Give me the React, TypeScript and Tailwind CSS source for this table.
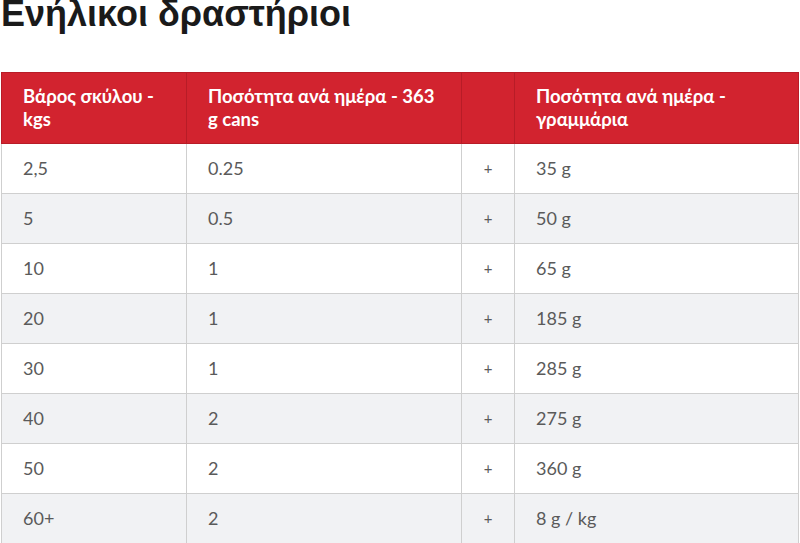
import React from "react";

const rows: [string, string, string][] = [
  ["2,5", "0.25", "35 g"],
  ["5", "0.5", "50 g"],
  ["10", "1", "65 g"],
  ["20", "1", "185 g"],
  ["30", "1", "285 g"],
  ["40", "2", "275 g"],
  ["50", "2", "360 g"],
  ["60+", "2", "8 g / kg"],
];

export default function App() {
  return (
    <div className="w-[800px] h-[543px] overflow-hidden bg-white">
      <h2 className="font-['Liberation_Sans',Arial,sans-serif] font-bold text-[36px] leading-none text-[#1a1a1a] pl-[1px] -mt-[4px] h-[76px]">
        Ενήλικοι δραστήριοι
      </h2>
      <table className="ml-[1px] w-[798px] border-collapse table-fixed font-['Lato',sans-serif]">
        <colgroup>
          <col className="w-[185px]" />
          <col className="w-[275px]" />
          <col className="w-[53px]" />
          <col />
        </colgroup>
        <thead>
          <tr className="bg-[#d2232f] text-white font-bold text-[18.5px] h-[71px]">
            <th className="text-left align-middle pl-[21px] pr-[18px] leading-[23px] border border-[#b81c27]">Βάρος σκύλου - kgs</th>
            <th className="text-left align-middle pl-[21px] pr-[18px] leading-[23px] border border-[#b81c27]">Ποσότητα ανά ημέρα - 363 g cans</th>
            <th className="border border-[#b81c27]"></th>
            <th className="text-left align-middle pl-[21px] pr-[18px] leading-[23px] border border-[#b81c27]">Ποσότητα ανά ημέρα - γραμμάρια</th>
          </tr>
        </thead>
        <tbody className="text-[#5a5a5a] text-[18px]">
          {rows.map((r, i) => (
            <tr key={i} className={`h-[50px] ${i % 2 === 1 ? "bg-[#f1f2f4]" : "bg-white"}`}>
              <td className="px-[21px] border border-[#cfcfcf]">{r[0]}</td>
              <td className="px-[21px] border border-[#cfcfcf]">{r[1]}</td>
              <td className="text-center text-[15px] border border-[#cfcfcf]">+</td>
              <td className="px-[21px] border border-[#cfcfcf]">{r[2]}</td>
            </tr>
          ))}
        </tbody>
      </table>
    </div>
  );
}
